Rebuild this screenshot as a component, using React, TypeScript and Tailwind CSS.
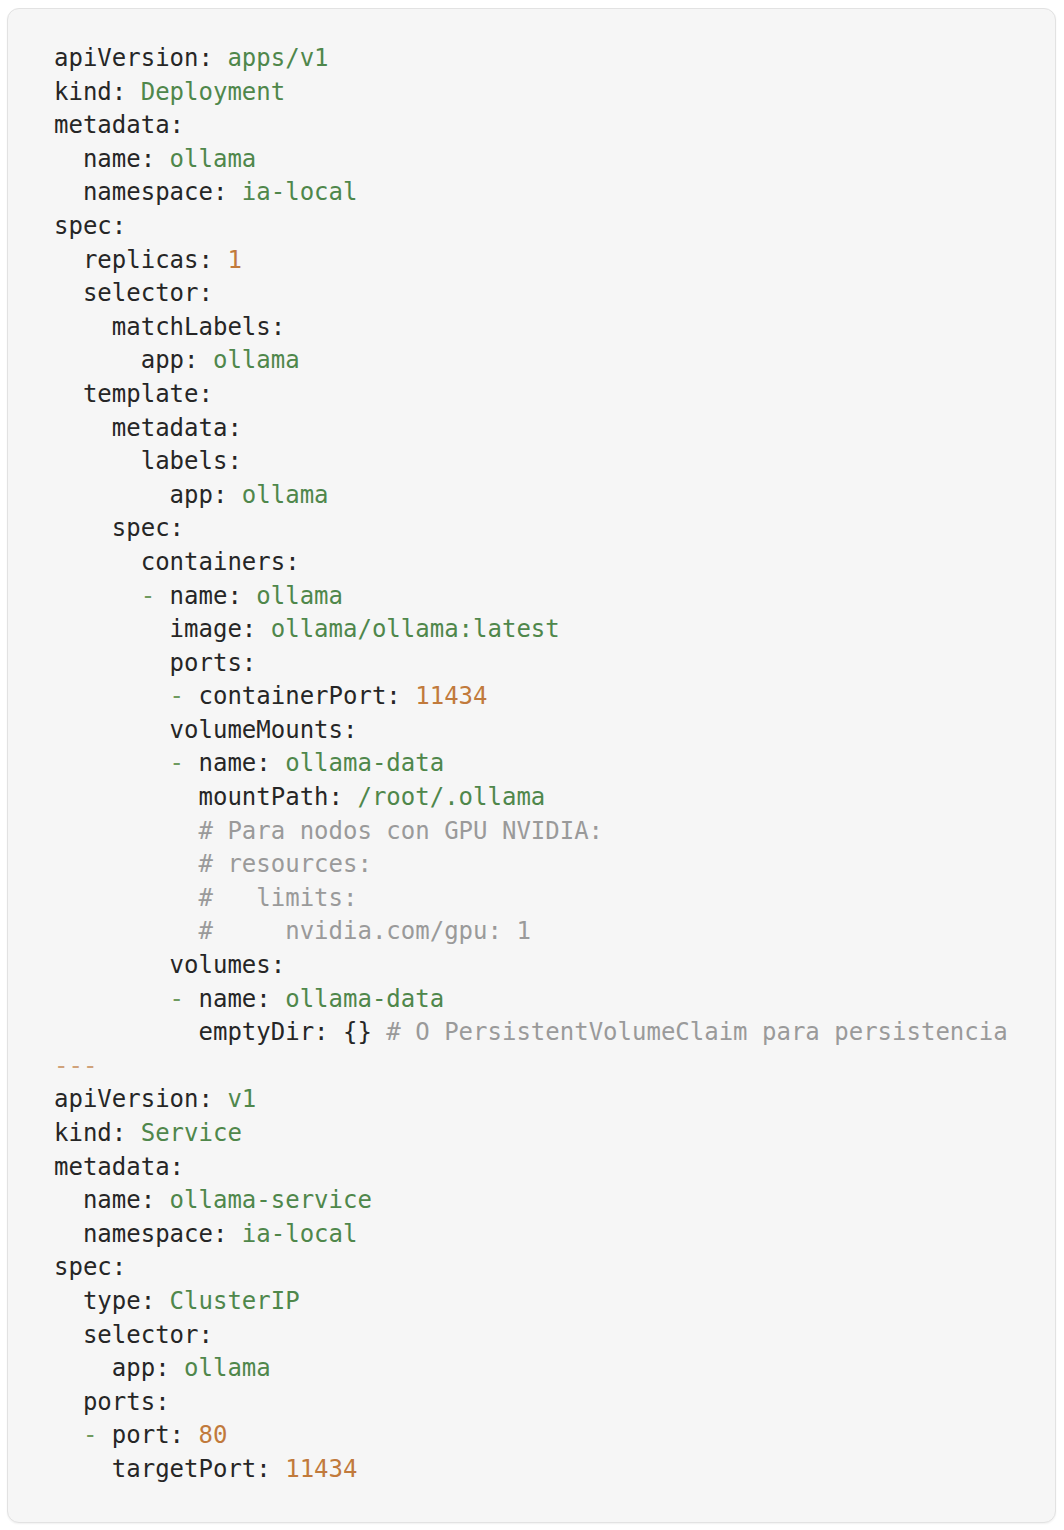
import React from 'react';

type Kind = 'k' | 's' | 'n' | 'c' | 'd' | 'p';

// one line of yaml = list of [kind, text] pieces
type Line = [Kind, string][];

const colors: Record<Kind, string> = {
  k: 'text-[#262626]',
  s: 'text-[#4f874b]',
  n: 'text-[#c17a3c]',
  c: 'text-[#9a9a9a]',
  d: 'text-[#6f9a5f]',
  p: 'text-[#d0a27a]',
};

const kv = (indent: string, key: string, val?: string, kind: Kind = 's'): Line => {
  const line: Line = [['k', `${indent}${key}:`]];
  if (val !== undefined) line.push([kind, ` ${val}`]);
  return line;
};

const dash = (indent: string, key: string, val: string, kind: Kind = 's'): Line => [
  ['k', indent],
  ['d', '-'],
  ['k', ` ${key}:`],
  [kind, ` ${val}`],
];

const lines: Line[] = [
  kv('', 'apiVersion', 'apps/v1'),
  kv('', 'kind', 'Deployment'),
  kv('', 'metadata'),
  kv('  ', 'name', 'ollama'),
  kv('  ', 'namespace', 'ia-local'),
  kv('', 'spec'),
  kv('  ', 'replicas', '1', 'n'),
  kv('  ', 'selector'),
  kv('    ', 'matchLabels'),
  kv('      ', 'app', 'ollama'),
  kv('  ', 'template'),
  kv('    ', 'metadata'),
  kv('      ', 'labels'),
  kv('        ', 'app', 'ollama'),
  kv('    ', 'spec'),
  kv('      ', 'containers'),
  dash('      ', 'name', 'ollama'),
  kv('        ', 'image', 'ollama/ollama:latest'),
  kv('        ', 'ports'),
  dash('        ', 'containerPort', '11434', 'n'),
  kv('        ', 'volumeMounts'),
  dash('        ', 'name', 'ollama-data'),
  kv('          ', 'mountPath', '/root/.ollama'),
  [['c', '          # Para nodos con GPU NVIDIA:']],
  [['c', '          # resources:']],
  [['c', '          #   limits:']],
  [['c', '          #     nvidia.com/gpu: 1']],
  kv('        ', 'volumes'),
  dash('        ', 'name', 'ollama-data'),
  [
    ['k', '          emptyDir: {}'],
    ['c', ' # O PersistentVolumeClaim para persistencia'],
  ],
  [['p', '---']],
  kv('', 'apiVersion', 'v1'),
  kv('', 'kind', 'Service'),
  kv('', 'metadata'),
  kv('  ', 'name', 'ollama-service'),
  kv('  ', 'namespace', 'ia-local'),
  kv('', 'spec'),
  kv('  ', 'type', 'ClusterIP'),
  kv('  ', 'selector'),
  kv('    ', 'app', 'ollama'),
  kv('  ', 'ports'),
  dash('  ', 'port', '80', 'n'),
  kv('    ', 'targetPort', '11434', 'n'),
];

export default function App() {
  return (
    <div className="min-h-[1530px] bg-white pl-[7px] pr-[8px] pt-[8px]">
      <div className="rounded-[12px] border border-[#e2e2e2] bg-[#f6f6f6] pb-[35px] pl-[46px] pt-[33px] shadow-[0_1px_2px_rgba(0,0,0,0.06)]">
        <pre className="whitespace-pre font-['DejaVu_Sans_Mono',monospace] text-[24px] leading-[33.6px]">
          {lines.map((line, i) => (
            <div key={i}>
              {line.map(([kind, text], j) => (
                <span key={j} className={colors[kind]}>
                  {text}
                </span>
              ))}
            </div>
          ))}
        </pre>
      </div>
    </div>
  );
}
